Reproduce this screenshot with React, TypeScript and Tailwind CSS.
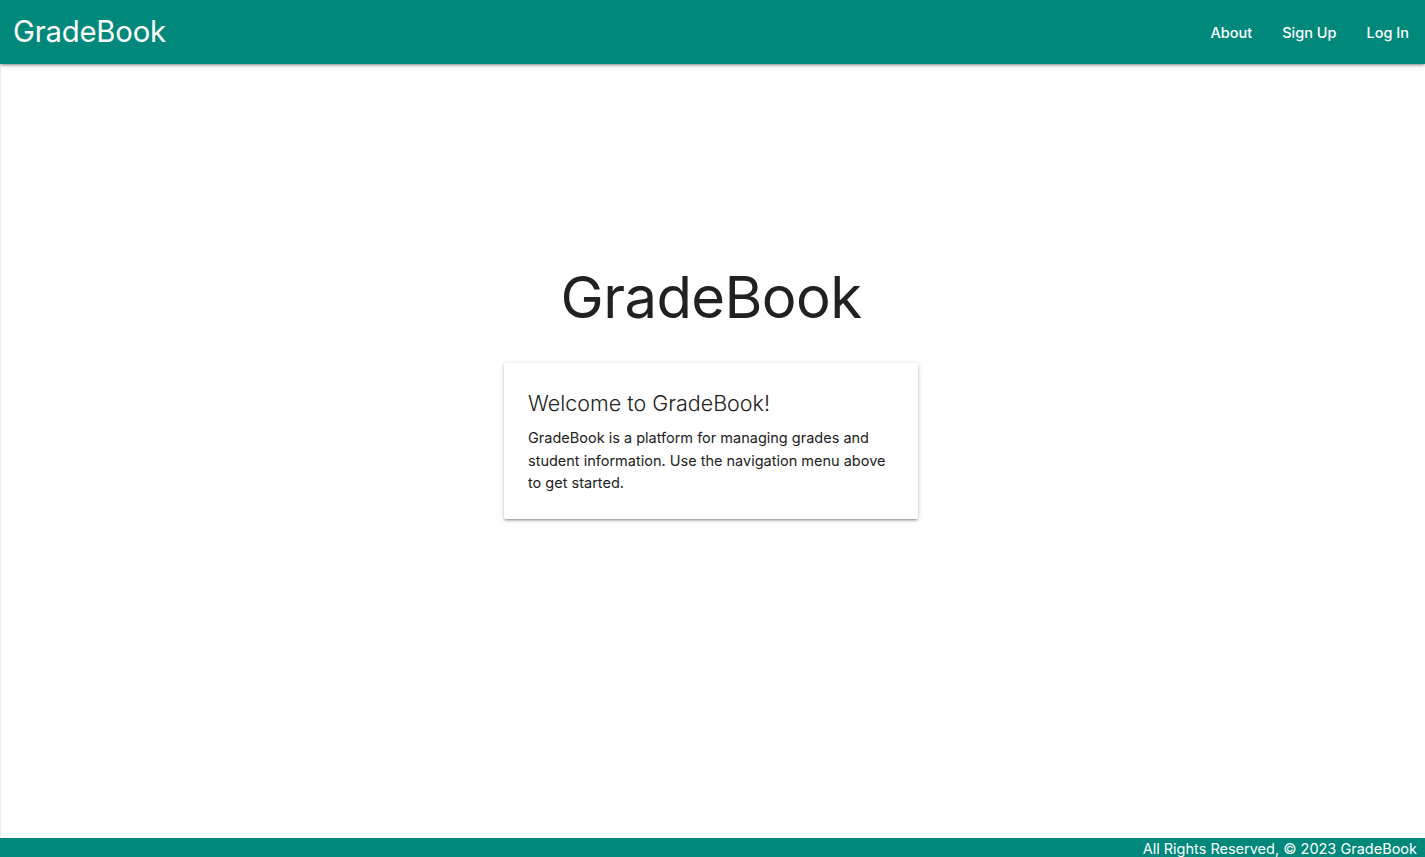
import React from "react";

export default function App() {
  return (
    <div
      className="flex h-[857px] w-full flex-col bg-white"
      style={{ fontFamily: "Inter, 'Noto Sans', sans-serif" }}
    >
      <header className="relative z-10 flex h-16 shrink-0 items-center justify-between bg-[#00897b] pl-[13px] pr-0 text-white shadow-[0_2px_2px_0_rgba(0,0,0,0.14),0_3px_1px_-2px_rgba(0,0,0,0.12),0_1px_5px_0_rgba(0,0,0,0.2)]">
        <a className="text-[29.3px] leading-none tracking-[-0.2px]">GradeBook</a>
        <nav className="flex h-full items-center pt-[2px]">
          <a className="px-[15px] text-[14.5px] font-medium">About</a>
          <a className="px-[15px] text-[14.5px] font-medium">Sign Up</a>
          <a className="pl-[15px] pr-[16px] text-[14.5px] font-medium">Log In</a>
        </nav>
      </header>
      <main className="flex flex-1 flex-col items-center border-l border-[#eeeeee] pr-[4px]">
        <h1 className="mt-[196px] text-[58px] leading-[74px] tracking-[-0.6px] text-[#212121]">
          GradeBook
        </h1>
        <div className="mt-[29px] w-[414px] rounded-[2px] bg-white p-6 shadow-[0_2px_2px_0_rgba(0,0,0,0.14),0_3px_1px_-2px_rgba(0,0,0,0.12),0_1px_5px_0_rgba(0,0,0,0.2)]">
          <div className="mb-[8px] text-[21.5px] font-light leading-[32px] text-[#212121]">
            Welcome to GradeBook!
          </div>
          <p className="text-[14.5px] leading-[22.5px] text-[#212121]">
            GradeBook is a platform for managing grades and student information. Use the navigation menu above to get started.
          </p>
        </div>
      </main>
      <footer className="flex h-[19px] shrink-0 items-center justify-end bg-[#00897b] pr-[8px] pt-[3px] text-[14.5px] leading-none text-white">
        All Rights Reserved, © 2023 GradeBook
      </footer>
    </div>
  );
}
